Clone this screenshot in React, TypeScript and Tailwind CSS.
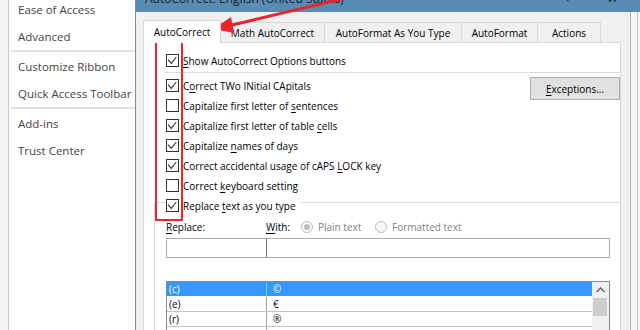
import React from "react";

const U = ({ children }: { children: React.ReactNode }) => (
  <span className="underline underline-offset-[2px] decoration-[1px]">{children}</span>
);

function Box({ checked }: { checked: boolean }) {
  return (
    <span className="w-[13px] h-[13px] shrink-0 border border-[#333333] bg-white flex items-center justify-center">
      {checked && (
        <svg width="11" height="11" viewBox="0 0 11 11">
          <polyline points="1,4.7 4.3,8.3 9.3,2" fill="none" stroke="#333333" strokeWidth="1.1" />
        </svg>
      )}
    </span>
  );
}

function Row({ checked, children, bg }: { checked: boolean; children: React.ReactNode; bg?: boolean }) {
  return (
    <div className="h-[20px] flex items-center">
      <div className={"flex items-center gap-[4px] h-[20px] " + (bg ? "bg-white pr-[4px]" : "")}>
        <Box checked={checked} />
        <span className="leading-[20px] whitespace-nowrap pt-[1px]">{children}</span>
      </div>
    </div>
  );
}

function Radio({ on, label }: { on: boolean; label: string }) {
  return (
    <div className="flex items-center gap-[5px]">
      <span className="w-[12px] h-[12px] rounded-full border border-[#bcbcbc] bg-[#f7f7f7] flex items-center justify-center">
        {on && <span className="w-[6px] h-[6px] rounded-full bg-[#bcbcbc]" />}
      </span>
      <span className="text-[#838383]">{label}</span>
    </div>
  );
}

const sideItems1 = ["Ease of Access", "Advanced"];
const sideItems2 = ["Customize Ribbon", "Quick Access Toolbar"];
const sideItems3 = ["Add-ins", "Trust Center"];

function SideItem({ t }: { t: string }) {
  return <div className="h-[27px] flex items-center whitespace-nowrap">{t}</div>;
}

const listRows = [
  ["(c)", "©"],
  ["(e)", "€"],
  ["(r)", "®"],
  ["(tm)", "™"],
];

export default function App() {
  return (
    <div className="relative w-[640px] h-[330px] overflow-hidden flex bg-white font-['Segoe_UI','Open_Sans',sans-serif] text-black">
      {/* far left strip */}
      <div className="w-[9px] shrink-0 bg-[#f3f3f3] border-r border-[#c6c6c6]" />
      {/* sidebar */}
      <div className="w-[127px] shrink-0 bg-white border-r border-[#8a8a8a] pl-[9px] text-[11.5px] text-[#444444]">
        <div className="-mt-[4px]">
          {sideItems1.map((t) => (
            <SideItem key={t} t={t} />
          ))}
          <div className="h-[2px] bg-[#e1e1e1] -ml-[7px] mb-[1px]" />
          {sideItems2.map((t) => (
            <SideItem key={t} t={t} />
          ))}
          <div className="h-[2px] bg-[#e1e1e1] -ml-[7px] mb-[1px]" />
          {sideItems3.map((t) => (
            <SideItem key={t} t={t} />
          ))}
        </div>
      </div>

      {/* dialog */}
      <div className="flex-1 flex flex-col text-[10px]">
        {/* title bar */}
        <div className="h-[12px] shrink-0 bg-[#588bb5] overflow-hidden flex pl-[9px] pr-[22px] text-[12px] text-[#1c1c1c]">
          <div className="-mt-[7px] leading-[12px] whitespace-nowrap">AutoCorrect: English (United States)</div>
          <div className="ml-auto -mt-[9px] leading-[12px]">?</div>
          <div className="ml-[36px] -mt-[8px] leading-[12px] text-[13px]">✕</div>
        </div>

        {/* body */}
        <div className="flex-1 flex bg-[#f0f0f0]">
          <div className="ml-[7px] w-[478px] flex flex-col pt-[8px]">
            {/* tabs */}
            <div className="h-[22px] flex items-end">
              <div className="relative z-10 h-[23px] -mb-[1px] w-[78px] bg-white border border-b-0 border-[#d9d9d9] flex items-center justify-center pt-[1px]">
                AutoCorrect
              </div>
              <div className="h-[20px] w-[104px] border-t border-r border-[#d9d9d9] flex items-center justify-center pt-[1px]">
                Math AutoCorrect
              </div>
              <div className="h-[20px] w-[137px] border-t border-r border-[#d9d9d9] flex items-center justify-center pt-[1px]">
                AutoFormat As You Type
              </div>
              <div className="h-[20px] w-[76px] border-t border-r border-[#d9d9d9] flex items-center justify-center pt-[1px]">
                AutoFormat
              </div>
              <div className="h-[20px] w-[63px] border-t border-r border-[#d9d9d9] flex items-center justify-center pt-[1px]">
                Actions
              </div>
            </div>

            {/* panel */}
            <div className="flex-1 bg-white border border-b-0 border-[#d9d9d9] flex flex-col pt-[7px]">
              <div className="pl-[22px]">
                <Row checked>
                  <U>S</U>how AutoCorrect Options buttons
                </Row>
              </div>
              <div className="h-[1px] bg-[#dcdcdc] ml-[21px] mt-[2px] mb-[2px]" />
              <div className="flex">
                <div className="pl-[22px] flex flex-col">
                  <Row checked>
                    C<U>o</U>rrect TWo INitial CApitals
                  </Row>
                  <Row checked={false}>
                    Capitalize first letter of <U>s</U>entences
                  </Row>
                  <Row checked>
                    Capitalize first letter of table <U>c</U>ells
                  </Row>
                  <Row checked>
                    Capitalize <U>n</U>ames of days
                  </Row>
                  <Row checked>
                    Correct accidental usage of cAPS <U>L</U>OCK key
                  </Row>
                  <Row checked={false}>
                    Correct <U>k</U>eyboard setting
                  </Row>
                </div>
                <div className="ml-auto mt-[2px] w-[90px] h-[23px] bg-[#e1e1e1] border border-[#adadad] flex items-center justify-center">
                  <span className="pt-[1px]">
                    <U>E</U>xceptions...
                  </span>
                </div>
              </div>

              {/* group box */}
              <div className="ml-[10px] mt-[7px] flex-1 border-t border-l border-[#dcdcdc] pl-[11px] flex flex-col">
                <div className="-mt-[8px]">
                  <Row checked bg>
                    Replace <U>t</U>ext as you type
                  </Row>
                </div>
                <div className="mt-[4px] h-[16px] flex items-center">
                  <div className="w-[100px]">
                    <U>R</U>eplace:
                  </div>
                  <div className="w-[35px]">
                    <U>W</U>ith:
                  </div>
                  <div className="w-[74px]">
                    <Radio on label="Plain text" />
                  </div>
                  <Radio on={false} label="Formatted text" />
                </div>
                <div className="mt-[3px] flex h-[20px]">
                  <div className="w-[100px] border border-r-0 border-[#abadb3]" />
                  <div className="w-[344px] border border-[#abadb3] border-l-[#7a7a7a]" />
                </div>
                {/* list */}
                <div className="mt-[23px] w-[444px] flex-1 border border-b-0 border-[#828790] flex">
                  <div className="flex-1 flex flex-col">
                    {listRows.map(([a, b], i) => (
                      <div
                        key={a}
                        className={
                          "h-[15px] flex border-b " +
                          (i === 0 ? "bg-[#3399ff] text-white border-white" : "border-[#c4c4c4]")
                        }
                      >
                        <div
                          className={
                            "w-[100px] pl-[2px] leading-[15px] border-r " +
                            (i === 0 ? "border-[#8cc4ff]" : "border-[#a0a0a0]")
                          }
                        >
                          {a}
                        </div>
                        <div className="pl-[6px] leading-[15px]">{b}</div>
                      </div>
                    ))}
                  </div>
                  <div className="w-[17px] bg-[#f0f0f0] flex flex-col items-center">
                    <div className="h-[16px] w-[17px] flex items-center justify-center">
                      <svg width="9" height="6" viewBox="0 0 9 6">
                        <polyline points="0.5,5 4.5,1 8.5,5" fill="none" stroke="#606060" strokeWidth="1.4" />
                      </svg>
                    </div>
                    <div className="w-[14px] h-[18px] bg-[#cdcdcd] -ml-[1px]" />
                  </div>
                </div>
              </div>
            </div>
          </div>
          {/* right strip */}
          <div className="flex-1 flex">
            <div className="w-[9px]" />
            <div className="w-[1px] bg-[#b0b0b0]" />
            <div className="w-[6px] bg-[#f7f7f7]" />
            <div className="w-[1px] bg-[#a9c6e2]" />
            <div className="flex-1 bg-[#f7f7f7]" />
          </div>
        </div>
      </div>

      {/* annotations */}
      <div className="absolute left-[155px] top-[35px] w-[28px] h-[186px] border-2 border-[#e8262b] pointer-events-none" />
      <svg className="absolute left-0 top-0 pointer-events-none" width="640" height="330" viewBox="0 0 640 330">
        <line x1="350" y1="-3" x2="228" y2="26" stroke="#e8262b" strokeWidth="3" />
        <polygon points="213,29 231,17 234,33" fill="#e8262b" />
      </svg>
    </div>
  );
}
